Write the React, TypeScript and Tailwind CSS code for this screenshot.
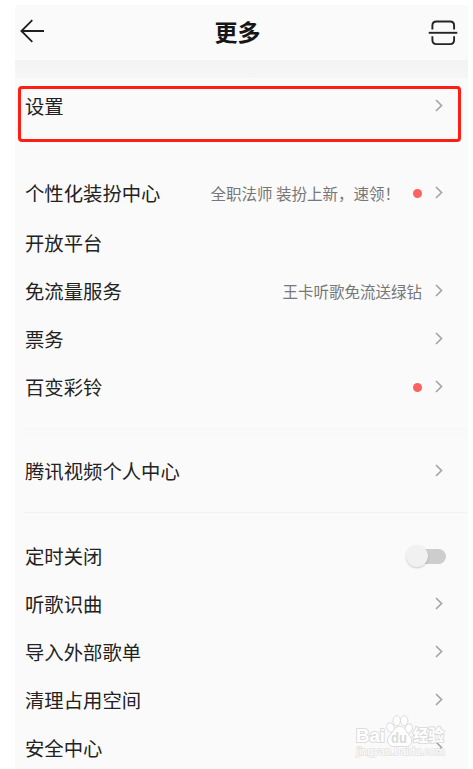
import React from 'react';

interface RowProps {
  label: string;
  note?: string;
  dot?: boolean;
  toggle?: boolean;
  plain?: boolean;
  className?: string;
}

const Chevron: React.FC = () => (
  <svg className="w-[8px] h-[14px] shrink-0" viewBox="0 0 8 14" fill="none">
    <path d="M1 1 6.5 6.5 1 12" stroke="#a6a6a6" strokeWidth="1.7" />
  </svg>
);

const Toggle: React.FC = () => (
  <div className="flex items-center w-[41px] h-[24px] -mr-[4px]">
    <div className="w-[22px] h-[22px] rounded-full bg-[#f1f1f1] shadow-[0_1px_2px_rgba(0,0,0,0.2)] relative z-10 shrink-0" />
    <div className="w-[29px] h-[15px] -ml-[11px] rounded-full bg-[#cdcdcd]" />
  </div>
);

const Row: React.FC<RowProps> = ({ label, note, dot, toggle, plain, className = 'h-[48px]' }) => (
  <div className={`flex items-center shrink-0 pl-[10px] pr-[25px] ${className}`}>
    <span className="text-[19.35px] leading-[28px] text-[#222222] whitespace-nowrap">{label}</span>
    <div className="ml-auto flex items-center">
      {note && <span className="text-[15.5px] leading-[22px] text-[#777777] whitespace-nowrap">{note}</span>}
      {dot && <span className="w-[9px] h-[9px] rounded-full bg-[#fb6261] ml-[13px]" />}
      {toggle && <Toggle />}
      {!toggle && !plain && (
        <span className="ml-[13px] flex">
          <Chevron />
        </span>
      )}
    </div>
  </div>
);

const Header: React.FC = () => (
  <header className="h-[55px] shrink-0 flex items-center justify-between pl-[5px] pr-[10px] pb-[3px]">
    <svg className="w-[25px] h-[24px] mb-px" viewBox="0 0 25 24" fill="none" stroke="#1f1f1f" strokeWidth="1.8">
      <path d="M12.3 1.2 1.4 12 12.3 22.8M1.4 12H24" />
    </svg>
    <h1 className="text-[23px] leading-[30px] font-bold text-[#161616] ml-[2px]">更多</h1>
    <svg className="w-[30px] h-[26px] mt-[3px]" viewBox="0 0 30 26" fill="none" stroke="#242424" strokeWidth="1.9">
      <path d="M4.4 9.4V5.6Q4.4 1.5 8.5 1.5H22Q26.1 1.5 26.1 5.6V9.4" />
      <path d="M.7 12.8H29.3" />
      <path d="M4.4 16.2V20Q4.4 24.1 8.5 24.1H22Q26.1 24.1 26.1 20V16.2" />
    </svg>
  </header>
);

const Watermark: React.FC = () => (
  <svg
    className="absolute left-[354px] top-[712px] w-[96px] h-[48px]"
    viewBox="0 0 96 48"
    fill="#ffffff"
    stroke="#dcdcdc"
    strokeWidth="1"
    fontFamily='"Liberation Sans", "Noto Sans CJK SC", sans-serif'
    fontWeight="700"
  >
    <ellipse cx="36.5" cy="15.5" rx="3.7" ry="4.8" transform="rotate(-20 36.5 15.5)" />
    <ellipse cx="42.7" cy="8.7" rx="3.7" ry="5" />
    <ellipse cx="50.2" cy="8.7" rx="3.7" ry="5" />
    <ellipse cx="54.7" cy="16.5" rx="3.7" ry="4.8" transform="rotate(20 54.7 16.5)" />
    <path d="M45.5 14.5C40 14.5 39.5 20 36 23C31 28 34 35 40 34.5H51C58 35 60 28 55 23C51.5 19 51 14.5 45.5 14.5Z" />
    <text x="2" y="30.3" fontSize="19" strokeWidth="2" paintOrder="stroke" textLength="29" lengthAdjust="spacingAndGlyphs">Bai</text>
    <text x="37" y="31" fontSize="14" fill="#dadada" stroke="none" textLength="16" lengthAdjust="spacingAndGlyphs">du</text>
    <text x="59" y="29" fontSize="15.5" strokeWidth="2" paintOrder="stroke" textLength="31">经验</text>
    <text x="2.5" y="42.5" fontSize="10" fontWeight="400" strokeWidth="1.4" stroke="#e2e2e2" paintOrder="stroke" textLength="88" lengthAdjust="spacingAndGlyphs">jingyan.baidu.com</text>
  </svg>
);

const App: React.FC = () => {
  return (
    <div
      lang="zh-CN"
      className="relative w-[473px] h-[769px] overflow-hidden bg-white pt-[5px] pl-[15px] pr-[5px] font-['Noto_Sans_CJK_SC',sans-serif]"
    >
      <main className="h-full bg-[#fafafa] flex flex-col">
        <Header />
        <div className="h-[18px] shrink-0 bg-linear-to-b from-[#f3f3f3] to-[#f6f6f6]" />

        <section className="mt-[8px] ml-[3px] mr-[7px] h-[56px] shrink-0 border-[3px] border-[#ff1e14] rounded-[4px]">
          <Row label="设置" className="h-[34px] -ml-[6px] -mr-[10px]" />
        </section>

        <div className="mt-[5px] mx-[9px] h-[3px] shrink-0 bg-[#f8f8f8]" />

        <section className="pt-[19px] shrink-0">
          <Row label="个性化装扮中心" note="全职法师 装扮上新，速领！" dot />
          <Row label="开放平台" plain className="h-[48px] mt-[2px]" />
          <Row label="免流量服务" note="王卡听歌免流送绿钻" />
          <Row label="票务" />
          <Row label="百变彩铃" dot />
        </section>

        <div className="mt-[17px] ml-[9px] h-[11px] shrink-0 border-t border-[#f5f5f5] bg-[#f9f9f9]" />

        <section className="pt-[8px] shrink-0">
          <Row label="腾讯视频个人中心" />
        </section>

        <div className="mt-[17px] ml-[9px] h-px shrink-0 bg-[#f3f3f3]" />

        <section className="pt-[19px] shrink-0">
          <Row label="定时关闭" toggle />
          <Row label="听歌识曲" />
          <Row label="导入外部歌单" />
          <Row label="清理占用空间" />
          <Row label="安全中心" />
        </section>
      </main>
      <Watermark />
    </div>
  );
};

export default App;
